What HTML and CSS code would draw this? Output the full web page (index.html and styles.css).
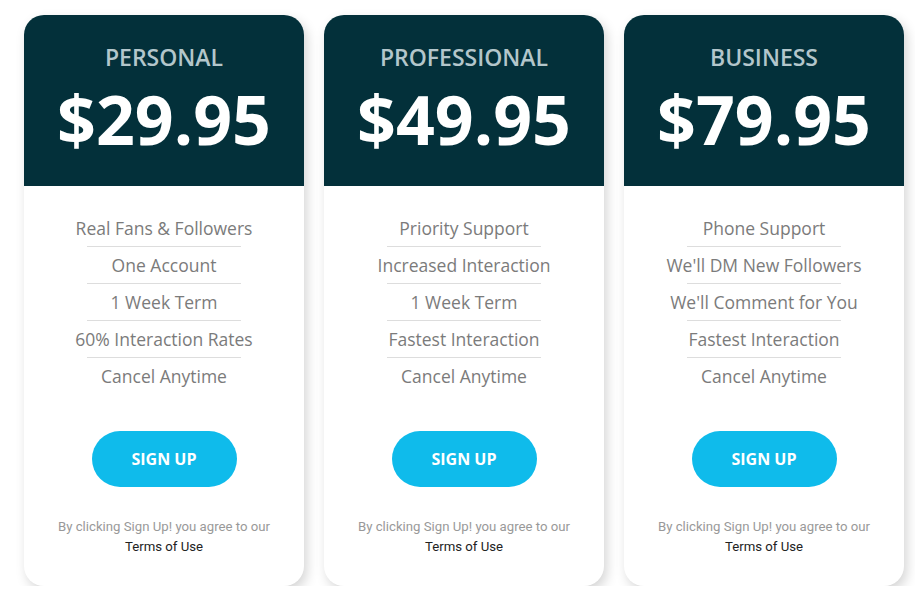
FILE: index.html
```html
<!DOCTYPE html>
<html>
<head>
<meta charset="utf-8">
<link rel="stylesheet" href="styles.css">
</head>
<body>
<div class="plans">
  <div class="card">
    <div class="head">
      <div class="name">PERSONAL</div>
      <div class="price">$29.95</div>
    </div>
    <ul class="features">
      <li>Real Fans &amp; Followers</li>
      <li>One Account</li>
      <li>1 Week Term</li>
      <li>60% Interaction Rates</li>
      <li>Cancel Anytime</li>
    </ul>
    <div class="btn">SIGN UP</div>
    <p class="terms">By clicking Sign Up! you agree to our<br><span>Terms of Use</span></p>
  </div>
  <div class="card">
    <div class="head">
      <div class="name">PROFESSIONAL</div>
      <div class="price">$49.95</div>
    </div>
    <ul class="features">
      <li>Priority Support</li>
      <li>Increased Interaction</li>
      <li>1 Week Term</li>
      <li>Fastest Interaction</li>
      <li>Cancel Anytime</li>
    </ul>
    <div class="btn">SIGN UP</div>
    <p class="terms">By clicking Sign Up! you agree to our<br><span>Terms of Use</span></p>
  </div>
  <div class="card">
    <div class="head">
      <div class="name">BUSINESS</div>
      <div class="price">$79.95</div>
    </div>
    <ul class="features">
      <li>Phone Support</li>
      <li>We'll DM New Followers</li>
      <li>We'll Comment for You</li>
      <li>Fastest Interaction</li>
      <li>Cancel Anytime</li>
    </ul>
    <div class="btn">SIGN UP</div>
    <p class="terms">By clicking Sign Up! you agree to our<br><span>Terms of Use</span></p>
  </div>
</div>
</body>
</html>
```

FILE: styles.css
```css
html, body {
  margin: 0;
  padding: 0;
  background: #ffffff;
}
body {
  font-family: "Open Sans", "Noto Sans", sans-serif;
}
.plans {
  display: flex;
  gap: 20px;
  padding: 15px 0 0 24px;
}
.card {
  width: 280px;
  height: 571px;
  border-radius: 20px;
  overflow: hidden;
  background: #fff;
  box-shadow: 3px 5px 12px rgba(0, 0, 0, 0.17);
  display: flex;
  flex-direction: column;
  align-items: center;
}
.head {
  align-self: stretch;
  height: 171px;
  flex-shrink: 0;
  background: #03303a;
  display: flex;
  flex-direction: column;
  align-items: center;
  box-sizing: border-box;
  padding-top: 28px;
  overflow: hidden;
}
.name {
  color: #b3c6cb;
  font-size: 23px;
  font-weight: 600;
  line-height: 28px;
}
.price {
  color: #ffffff;
  font-size: 68px;
  font-weight: 700;
  line-height: 96px;
  flex-shrink: 0;
}
.features {
  list-style: none;
  margin: 24px 0 0 0;
  padding: 0;
  display: flex;
  flex-direction: column;
  align-items: center;
}
.features li {
  width: 154px;
  text-align: center;
  white-space: nowrap;
  display: flex;
  justify-content: center;
  color: #7b7b7b;
  font-size: 17.5px;
  line-height: 36px;
  border-bottom: 1px solid #dddddd;
}
.features li:last-child {
  border-bottom: none;
}
.btn {
  margin-top: 37px;
  width: 145px;
  height: 56px;
  border-radius: 28px;
  background: #0fbbeb;
  color: #ffffff;
  font-size: 16px;
  font-weight: 700;
  display: flex;
  align-items: center;
  justify-content: center;
}
.terms {
  margin: 30px 0 0 0;
  text-align: center;
  font-family: "Roboto", sans-serif;
  font-size: 13.2px;
  line-height: 20px;
  color: #999999;
}
.terms span {
  color: #222222;
}
```
